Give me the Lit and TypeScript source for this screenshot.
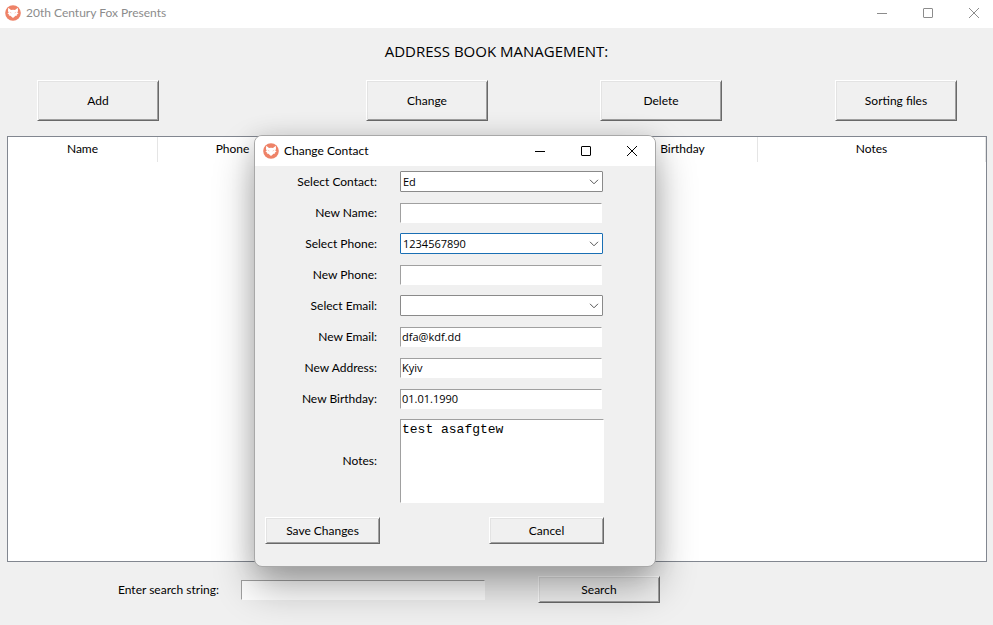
import { LitElement, html, css, svg } from "lit";
import { customElement, property } from "lit/decorators.js";

const base = css`
  * {
    box-sizing: border-box;
  }
  button,
  input,
  select,
  textarea {
    font: inherit;
    color: #000;
    margin: 0;
    border-radius: 0;
    outline: none;
  }
  .raised {
    padding: 0;
    height: 27px;
    background: #f0f0f0;
    border: 1px solid;
    border-color: #fff #696969 #696969 #fff;
    box-shadow: inset 1px 1px #e3e3e3, inset -1px -1px #a0a0a0;
  }
  .sunken {
    height: 20px;
    padding: 0 1px;
    background: #fff;
    border: 1px solid;
    border-color: #a0a0a0 #fff #fff #a0a0a0;
  }
`;

@customElement("window-bar")
export class WindowBar extends LitElement {
  @property() caption = "";

  static styles = [
    base,
    css`
      :host {
        display: flex;
        align-items: center;
        gap: 10px;
        flex: none;
        background: #fff;
      }
      .title {
        flex: 1;
        display: flex;
        align-items: center;
        gap: 5px;
      }
      .logo {
        flex: none;
        width: 16px;
        height: 16px;
      }
      .caption {
        margin: 0;
        font-size: 12px;
        line-height: 16px;
        font-weight: 400;
        white-space: nowrap;
      }
      .control {
        display: flex;
        align-items: center;
        justify-content: center;
        width: 36px;
        height: 24px;
        padding: 0;
        border: 0;
        background: none;
        color: inherit;
      }
      .glyph {
        display: block;
        width: 12px;
        height: 12px;
        fill: none;
        stroke: currentColor;
      }
    `,
  ];

  private control(name: string, shape: unknown) {
    return html`<button class="control" type="button" aria-label=${name}>
      <svg class="glyph" viewBox="0 0 12 12">${shape}</svg>
    </button>`;
  }

  render() {
    return html`
      <div class="title">
        <svg class="logo" viewBox="0 0 16 16" aria-hidden="true">
          <circle cx="8" cy="8" r="7.8" fill="#ee8267" />
          <path
            d="M3.2 2.8 L6 5 Q8 4.4 10 5 L12.8 2.8 Q13.4 6 12.3 7.8 L13.6 8.8 L11.8 9.4 L12.2 10.6 L10.6 10.8 L8 13 L5.4 10.8 L3.8 10.6 L4.2 9.4 L2.4 8.8 L3.7 7.8 Q2.6 6 3.2 2.8Z"
            fill="#fff"
          />
          <path d="M4.8 7.2 L6.4 8.1 M11.2 7.2 L9.6 8.1" stroke="#f6b9a9" stroke-width="0.7" />
        </svg>
        <h2 class="caption">${this.caption}</h2>
      </div>
      ${this.control("Minimize", svg`<path d="M1 6.5H11" />`)}
      ${this.control("Maximize", svg`<rect x="1.5" y="1.5" width="9" height="9" rx="0.5" />`)}
      ${this.control("Close", svg`<path d="M1 1L11 11M11 1L1 11" />`)}
    `;
  }
}

interface Field {
  id: string;
  label: string;
  value: string;
  kind: "select" | "input";
  active?: boolean;
}

const FIELDS: Field[] = [
  { id: "contact", label: "Select Contact:", value: "Ed", kind: "select" },
  { id: "name", label: "New Name:", value: "", kind: "input" },
  { id: "phone", label: "Select Phone:", value: "1234567890", kind: "select", active: true },
  { id: "new-phone", label: "New Phone:", value: "", kind: "input" },
  { id: "email", label: "Select Email:", value: "", kind: "select" },
  { id: "new-email", label: "New Email:", value: "dfa@kdf.dd", kind: "input" },
  { id: "address", label: "New Address:", value: "Kyiv", kind: "input" },
  { id: "birthday", label: "New Birthday:", value: "01.01.1990", kind: "input" },
];

@customElement("change-dialog")
export class ChangeDialog extends LitElement {
  static styles = [
    base,
    css`
      :host {
        display: block;
        overflow: hidden;
        background: #f0f0f0;
        border: 1px solid #a8a8a8;
        border-radius: 8px;
        box-shadow: 0 20px 40px rgba(0, 0, 0, 0.32), 0 2px 24px rgba(0, 0, 0, 0.12);
      }
      .bar {
        height: 30px;
        padding: 0 5px 0 8px;
      }
      .form {
        display: grid;
        grid-template-columns: 112px 204px;
        column-gap: 23px;
        row-gap: 10px;
        grid-auto-rows: minmax(21px, auto);
        align-items: center;
        padding: 5px 10px 22px;
      }
      .label {
        text-align: right;
        white-space: nowrap;
      }
      .sunken {
        width: 202px;
        font-family: "Open Sans", sans-serif;
        font-size: 11px;
      }
      .combo {
        position: relative;
        width: 203px;
        height: 21px;
      }
      .select {
        appearance: none;
        display: block;
        width: 100%;
        height: 100%;
        padding: 0 20px 0 2px;
        background: #fff;
        border: 1px solid #8a8a8a;
        border-radius: 1px;
        font-family: "Open Sans", sans-serif;
        font-size: 11px;
      }
      .select.active {
        border-color: #1a6fb4;
      }
      .chevron {
        position: absolute;
        right: 4px;
        top: 8px;
        width: 10px;
        height: 6px;
        fill: none;
        stroke: #555;
        pointer-events: none;
      }
      .notes {
        display: block;
        width: 204px;
        height: 84px;
        padding: 2px 1px;
        resize: none;
        overflow: hidden;
        background: #fff;
        border: 1px solid;
        border-color: #a0a0a0 #fff #fff #a0a0a0;
        font: 13px/16px "Liberation Mono", monospace;
      }
      .actions {
        grid-column: 1 / -1;
        display: flex;
        justify-content: space-between;
        padding-top: 4px;
      }
      .action {
        width: 115px;
      }
    `,
  ];

  private control(f: Field) {
    return f.kind === "input"
      ? html`<input class="sunken" id=${f.id} type="text" .value=${f.value} />`
      : html`<div class="combo">
          <select class="select ${f.active ? "active" : ""}" id=${f.id}>
            <option>${f.value}</option>
          </select>
          <svg class="chevron" viewBox="0 0 10 6" aria-hidden="true">
            <path d="M1 0.8L5 4.8L9 0.8" />
          </svg>
        </div>`;
  }

  render() {
    return html`
      <window-bar class="bar" caption="Change Contact"></window-bar>
      <form class="form">
        ${FIELDS.map((f) => html`<label class="label" for=${f.id}>${f.label}</label>${this.control(f)}`)}
        <label class="label" for="notes">Notes:</label>
        <textarea class="notes" id="notes" spellcheck="false" .value=${"test asafgtew"}></textarea>
        <div class="actions">
          <button class="raised action" type="button">Save Changes</button>
          <button class="raised action" type="button">Cancel</button>
        </div>
      </form>
    `;
  }
}

@customElement("app-root")
export class AppRoot extends LitElement {
  static styles = [
    base,
    css`
      :host {
        display: flex;
        flex-direction: column;
        position: relative;
        min-height: 100vh;
        background: #f0f0f0;
        color: #000;
        font: 12px/16px Lato, "Open Sans", sans-serif;
        overflow: hidden;
      }
      .bar {
        height: 28px;
        padding: 0 1px 3px 5px;
        color: #8c8c8c;
      }
      .heading {
        margin: 11px 0 17px;
        font: 400 15px/24px "Open Sans", sans-serif;
        text-align: center;
      }
      .toolbar {
        display: grid;
        grid-template-columns: 37fr 122px 207fr 122px 112fr 122px 113fr 122px 36fr;
      }
      .tool {
        height: 41px;
      }
      .tool:nth-child(1) {
        grid-column: 2;
      }
      .tool:nth-child(2) {
        grid-column: 4;
      }
      .tool:nth-child(3) {
        grid-column: 6;
      }
      .tool:nth-child(4) {
        grid-column: 8;
      }
      .list {
        flex: 1;
        margin: 15px 6px 14px 7px;
        background: #fff;
        border: 1px solid #828790;
      }
      .table {
        width: 100%;
        table-layout: fixed;
        border-collapse: separate;
        border-spacing: 0;
      }
      .column {
        width: 150px;
        height: 25px;
        padding: 0 0 2px;
        font-weight: 400;
        border-right: 1px solid #e5e5e5;
      }
      .column:last-child {
        width: auto;
      }
      .search {
        display: flex;
        align-items: center;
        margin: 0 0 22px 118px;
      }
      .query {
        width: 244px;
        margin: 0 53px 0 23px;
      }
      .find {
        width: 122px;
      }
      .label {
        width: 100px;
        white-space: nowrap;
      }
      .dialog {
        position: absolute;
        left: 254px;
        top: 135px;
        width: 402px;
      }
    `,
  ];

  render() {
    return html`
      <window-bar class="bar" caption="20th Century Fox Presents"></window-bar>
      <h1 class="heading">ADDRESS BOOK MANAGEMENT:</h1>
      <nav class="toolbar">
        ${["Add", "Change", "Delete", "Sorting files"].map(
          (t) => html`<button class="raised tool" type="button">${t}</button>`
        )}
      </nav>
      <div class="list">
        <table class="table">
          <thead>
            <tr>
              ${["Name", "Phone", "", "", "Birthday", "Notes"].map(
                (c) => html`<th class="column" scope="col">${c}</th>`
              )}
            </tr>
          </thead>
        </table>
      </div>
      <div class="search">
        <label class="label" for="query">Enter search string:</label>
        <input class="sunken query" id="query" type="text" />
        <button class="raised find" type="button">Search</button>
      </div>
      <change-dialog class="dialog" role="dialog" aria-label="Change Contact"></change-dialog>
    `;
  }
}
